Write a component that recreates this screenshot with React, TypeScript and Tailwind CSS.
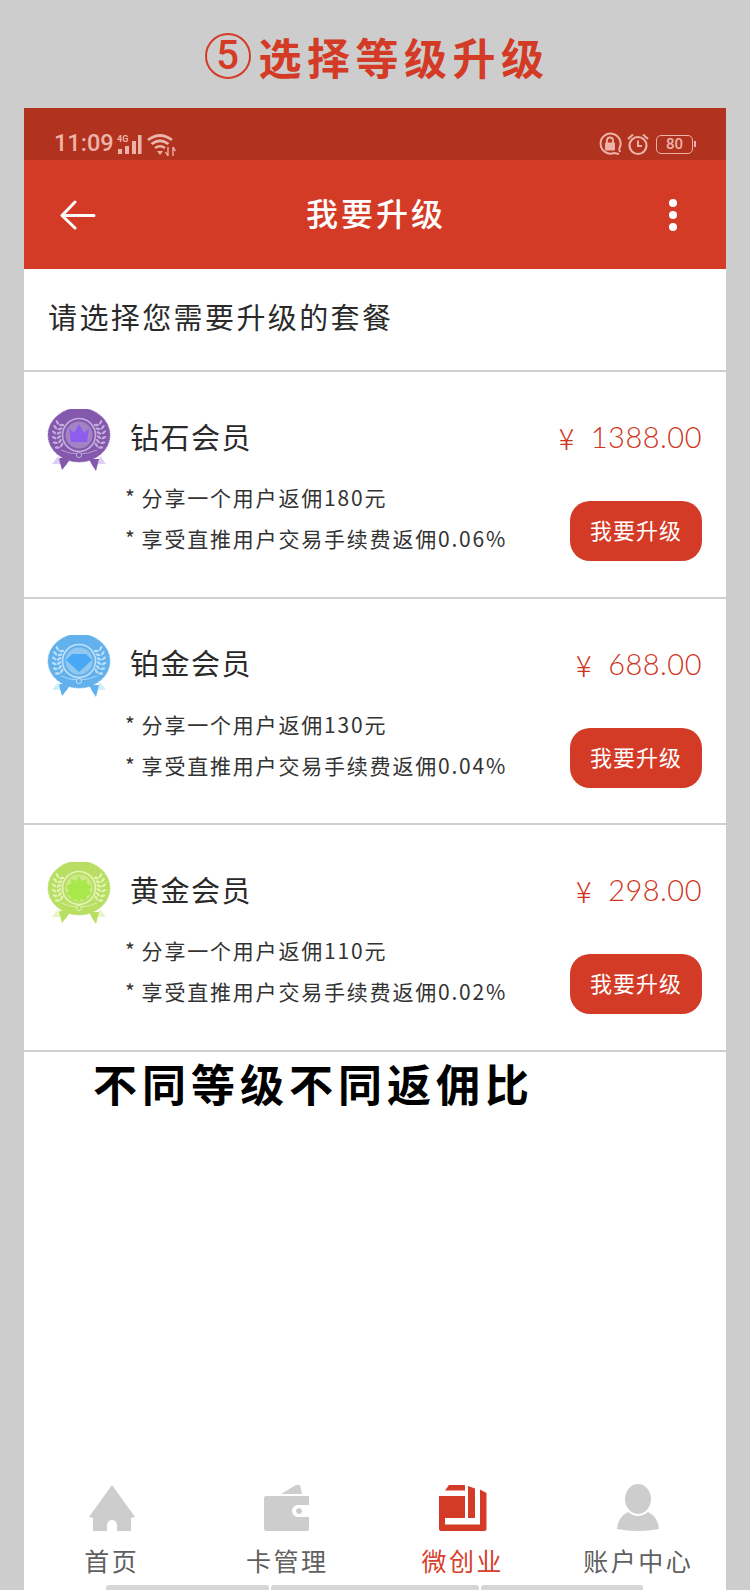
const cjk = { fontFamily: '"Noto Sans CJK SC", sans-serif' };

type Tier = {
  name: string; price: string; rebate: string; pct: string;
  main: string; light: string; pale: string; inner: string; glyph: "crown" | "gem" | "star";
};

const tiers: Tier[] = [
  { name: "钻石会员", price: "1388.00", rebate: "180", pct: "0.06%", main: "#8458ac", light: "#c4aedd", pale: "#dcd0f5", inner: "#8f5cf0", glyph: "crown" },
  { name: "铂金会员", price: "688.00", rebate: "130", pct: "0.04%", main: "#62b1ec", light: "#bfe0f8", pale: "#cdeefa", inner: "#48a8f5", glyph: "gem" },
  { name: "黄金会员", price: "298.00", rebate: "110", pct: "0.02%", main: "#b8de62", light: "#e4f4b8", pale: "#e8f6c4", inner: "#a8e84a", glyph: "star" },
];

const angles = [150, 162, 174, 186, 198, 210];

function Wheat({ flip, color }: { flip?: boolean; color: string }) {
  return (
    <g transform={flip ? "translate(66 0) scale(-1 1)" : undefined} fill={color}>
      {angles.map((a) => {
        const rad = (a * Math.PI) / 180;
        const ix = 33 + 20 * Math.cos(rad);
        const iy = 26 - 20 * Math.sin(rad);
        const ox = 33 + 25 * Math.cos(rad);
        const oy = 26 - 25 * Math.sin(rad);
        const tilt = 90 - a;
        return (
          <g key={a}>
            <ellipse cx={ix} cy={iy} rx="1.2" ry="2.6" transform={`rotate(${tilt - 30} ${ix} ${iy})`} />
            <ellipse cx={ox} cy={oy} rx="1.2" ry="2.6" transform={`rotate(${tilt + 30} ${ox} ${oy})`} />
          </g>
        );
      })}
    </g>
  );
}

function Badge({ t }: { t: Tier }) {
  return (
    <svg width="66" height="63" viewBox="0 0 66 63" className="shrink-0">
      <path d="M6 55 L12 47 L16 55 Z" fill={t.pale} />
      <path d="M60 55 L54 47 L50 55 Z" fill={t.pale} />
      <path d="M13 50 L23 50 L20 56 L16 61 Z" fill={t.main} />
      <path d="M53 50 L43 50 L46 56 L50 62 Z" fill={t.main} />
      <path d="M13 49 H25 L20 56 Z" fill={t.main} />
      <ellipse cx="33" cy="26" rx="31" ry="27" fill={t.main} stroke={t.main} strokeWidth="1" strokeDasharray="1 1" />
      <Wheat color={t.light} />
      <Wheat flip color={t.light} />
      <circle cx="33" cy="26" r="16.5" fill="none" stroke={t.light} strokeWidth="1.6" />
      <circle cx="33" cy="26" r="13.5" fill={t.light} opacity="0.5" />
      <path d="M15 41 Q33 49 51 41" fill="none" stroke={t.light} strokeWidth="0.8" />
      <circle cx="33" cy="46" r="2.6" fill={t.main} stroke={t.light} strokeWidth="1" />
      {t.glyph === "crown" && (
        <path d="M23 19 L28 24 L33 15 L38 24 L43 19 L41 33 L25 33 Z" fill={t.inner} />
      )}
      {t.glyph === "gem" && (
        <path d="M26 19 H40 L46 25 L33 37 L20 25 Z" fill={t.inner} />
      )}
      {t.glyph === "star" && (
        <path d="M33 14 L36 19 L41 17 L41 22 L46 24 L43 28 L46 32 L41 34 L40 39 L35 37 L33 40 L29 37 L25 39 L25 34 L20 32 L23 28 L20 24 L25 22 L25 17 L30 19 Z" fill={t.inner} />
      )}
    </svg>
  );
}

function Row({ t }: { t: Tier }) {
  return (
    <div className="h-[226.5px] shrink-0 border-b-2 border-[#d0d0d0] pl-[22px] pr-[24px] pt-[36px] flex flex-col">
      <div className="flex items-center h-[64px]">
        <Badge t={t} />
        <div className="ml-[18px] -mt-[9px] text-[29px] leading-[40px] tracking-[1.5px] text-[#2a2a2a]">{t.name}</div>
        <div className="ml-auto -mt-[6px] text-[#cf3420] text-[29px] font-light leading-[40px] tracking-[0.5px] flex items-center" style={{ fontFamily: 'Lato, sans-serif' }}>
          <span className="mr-[16px]" style={cjk}>¥</span>{t.price}
        </div>
      </div>
      <div className="flex justify-between">
        <div className="pl-[79px] text-[21px] text-[#333333] tracking-[1.8px] leading-[41px] pt-[5px]">
          <div><span className="mr-[5px]">*</span>分享一个用户返佣{t.rebate}元</div>
          <div><span className="mr-[5px]">*</span>享受直推用户交易手续费返佣{t.pct}</div>
        </div>
        <button className="w-[132px] h-[60px] mt-[29px] rounded-[20px] bg-[#d43b26] text-white text-[22px] tracking-[1px] leading-none pb-[4px] shrink-0">
          我要升级
        </button>
      </div>
    </div>
  );
}

function StatusBar() {
  const c = "#edb3a9";
  return (
    <div className="h-[52px] shrink-0 bg-[#b1321f] flex items-end pl-[30px] pr-[30px] pb-[1px] justify-between">
      <div className="flex items-center h-[30px]">
        <span className="text-[23.5px] font-medium leading-none text-[#edb3a9]" style={{ fontFamily: 'Roboto, sans-serif' }}>11:09</span>
        <svg width="62" height="26" viewBox="0 0 62 26" className="ml-[3px]">
          <rect x="1" y="18" width="4" height="5" fill={c} />
          <rect x="8" y="15" width="4" height="8" fill={c} />
          <rect x="15" y="10" width="4" height="13" fill={c} />
          <rect x="21" y="4" width="3.5" height="19" fill={c} />
          <text x="0" y="11" fontSize="9" fontWeight="700" fill={c} fontFamily="Roboto">4G</text>
          <path d="M31 9 Q43 0 55 9" fill="none" stroke={c} strokeWidth="2.8" />
          <path d="M34.5 13 Q43 6.5 51.5 13" fill="none" stroke={c} strokeWidth="2.8" />
          <path d="M38 17 Q43 13.5 48 17" fill="none" stroke={c} strokeWidth="2.6" />
          <path d="M40 20 H46 L43 24 Z" fill={c} />
          <path d="M51 16 V25 M51 25 L48.5 21 M56 25 V16 M56 16 L58.5 20" stroke={c} strokeWidth="1.4" fill="none" />
        </svg>
      </div>
      <div className="flex items-center h-[30px]">
        <svg width="24" height="24" viewBox="0 0 24 24" className="mr-[4px]">
          <path d="M21 17 A10 10 0 1 0 16 21 M16 21 L21 22 M21 17 L22 20" fill="none" stroke={c} strokeWidth="2" />
          <rect x="7" y="10.5" width="10" height="8" rx="1" fill={c} />
          <path d="M9 11 V8.5 a3 3 0 0 1 6 0 V11" fill="none" stroke={c} strokeWidth="1.8" />
        </svg>
        <svg width="24" height="24" viewBox="0 0 24 24" className="mr-[6px]">
          <circle cx="12" cy="13.5" r="8.5" fill="none" stroke={c} strokeWidth="2.2" />
          <path d="M12 8.5 V14 H16" fill="none" stroke={c} strokeWidth="2" />
          <path d="M2 7 L7 2.5 M22 7 L17 2.5" stroke={c} strokeWidth="2" />
        </svg>
        <div className="w-[37px] h-[19px] rounded-[5px] border-[1.5px] border-[#edb3a9] flex items-center justify-center text-[15px] leading-none text-[#edb3a9] font-medium" style={{ fontFamily: 'Roboto, sans-serif' }}>80</div>
        <div className="w-[2px] h-[6px] ml-[1px] bg-[#edb3a9]" />
      </div>
    </div>
  );
}

const tabs = [
  { label: "首页", active: false, icon: (
    <svg width="48" height="46" viewBox="0 0 48 46" fill="#cdcdcd">
      <path d="M24 0 L47 32 L43 33 V46 H29 V40 a5 5 0 0 0 -10 0 V46 H5 V33 L1 32 Z" />
    </svg>
  ) },
  { label: "卡管理", active: false, icon: (
    <svg width="48" height="46" viewBox="0 0 48 46" fill="#cdcdcd">
      <path d="M18 9 L33 0 L37 0 L39 9 Z" />
      <path d="M3 11 H46 V20 H35 a5.5 5.5 0 0 0 0 12 H46 V44 a2 2 0 0 1 -2 2 H3 a2 2 0 0 1 -2 -2 V13 a2 2 0 0 1 2 -2 Z" />
      <path d="M36 23 a3 3 0 1 0 0.01 0 Z" />
    </svg>
  ) },
  { label: "微创业", active: true, icon: (
    <svg width="48" height="46" viewBox="0 0 48 46" fill="#d43b26">
      <path d="M6 5.5 L10 0 H26 V5.5 Z" />
      <path d="M0 11 H26 V33 H6 V39.5 H41 V4.5 L47.5 8 V44 a2 2 0 0 1 -2 2 H2 a2 2 0 0 1 -2 -2 Z" />
      <path d="M29 1 L36 3.5 V33 H29 Z" />
    </svg>
  ) },
  { label: "账户中心", active: false, icon: (
    <svg width="44" height="48" viewBox="0 0 44 48" fill="#cdcdcd">
      <ellipse cx="22" cy="15" rx="13" ry="15" />
      <path d="M12 28 Q22 36 32 28 Q42 33 43 45 Q22 49 1 45 Q2 33 12 28 Z" />
    </svg>
  ) },
];

export default function App() {
  return (
    <div className="w-[750px] h-[1590px] bg-[#cdcdcd] overflow-hidden flex flex-col" style={cjk}>
      <div className="h-[108px] shrink-0 flex items-center justify-center pt-[4px] pl-[4px]">
        <div className="flex items-center text-[#d43b26] text-[43px] font-bold tracking-[5.5px] leading-none">
          <span className="w-[46px] h-[46px] rounded-full border-2 border-[#d43b26] flex items-center justify-center font-medium text-[40px] tracking-normal mr-[8px]" style={{ fontFamily: 'Roboto, sans-serif' }}>5</span>
          选择等级升级
        </div>
      </div>
      <div className="mx-[24px] flex-1 bg-white flex flex-col min-h-0">
        <StatusBar />
        <div className="h-[109px] shrink-0 bg-[#d43b26] grid grid-cols-[1fr_auto_1fr] items-center pl-[36px] pr-[49px]">
          <svg width="36" height="30" viewBox="0 0 36 30" fill="none" stroke="white" strokeWidth="3" strokeLinecap="round" strokeLinejoin="round">
            <path d="M34 15.5 H3 M15 2 L2 15.5 L15 28" />
          </svg>
          <div className="text-white text-[32px] font-medium tracking-[3px] leading-none -mt-[6px] ml-[15px]">我要升级</div>
          <div className="flex flex-col gap-[4px] justify-self-end">
            <span className="w-[8px] h-[8px] rounded-full bg-white" />
            <span className="w-[8px] h-[8px] rounded-full bg-white" />
            <span className="w-[8px] h-[8px] rounded-full bg-white" />
          </div>
        </div>
        <div className="h-[103px] shrink-0 border-b-2 border-[#d0d0d0] pl-[24px] pb-[6px] flex items-center text-[29px] tracking-[2.4px] text-[#2a2a2a]">
          请选择您需要升级的套餐
        </div>
        {tiers.map((t) => <Row key={t.name} t={t} />)}
        <div className="pl-[69px] pt-[3px] text-[44px] leading-[56px] font-bold tracking-[5px] text-black">不同等级不同返佣比</div>
        <div className="flex-1" />
        <div className="grid grid-cols-4 shrink-0">
          {tabs.map((tab) => (
            <div key={tab.label} className="flex flex-col items-center">
              <div className="h-[48px] flex items-center justify-center">{tab.icon}</div>
              <div className={`mt-[14px] text-[25px] leading-[28px] tracking-[2.5px] ${tab.active ? "text-[#d8402c]" : "text-[#606060]"}`}>{tab.label}</div>
            </div>
          ))}
        </div>
        <div className="mt-[11px] h-[5px] shrink-0 pl-[82px] flex gap-[2px]">
          <div className="w-[163px] rounded-t-[3px] bg-[#d6d6d6]" />
          <div className="w-[208px] rounded-t-[3px] bg-[#d6d6d6]" />
          <div className="w-[162px] rounded-t-[3px] bg-[#d6d6d6]" />
        </div>
      </div>
    </div>
  );
}
